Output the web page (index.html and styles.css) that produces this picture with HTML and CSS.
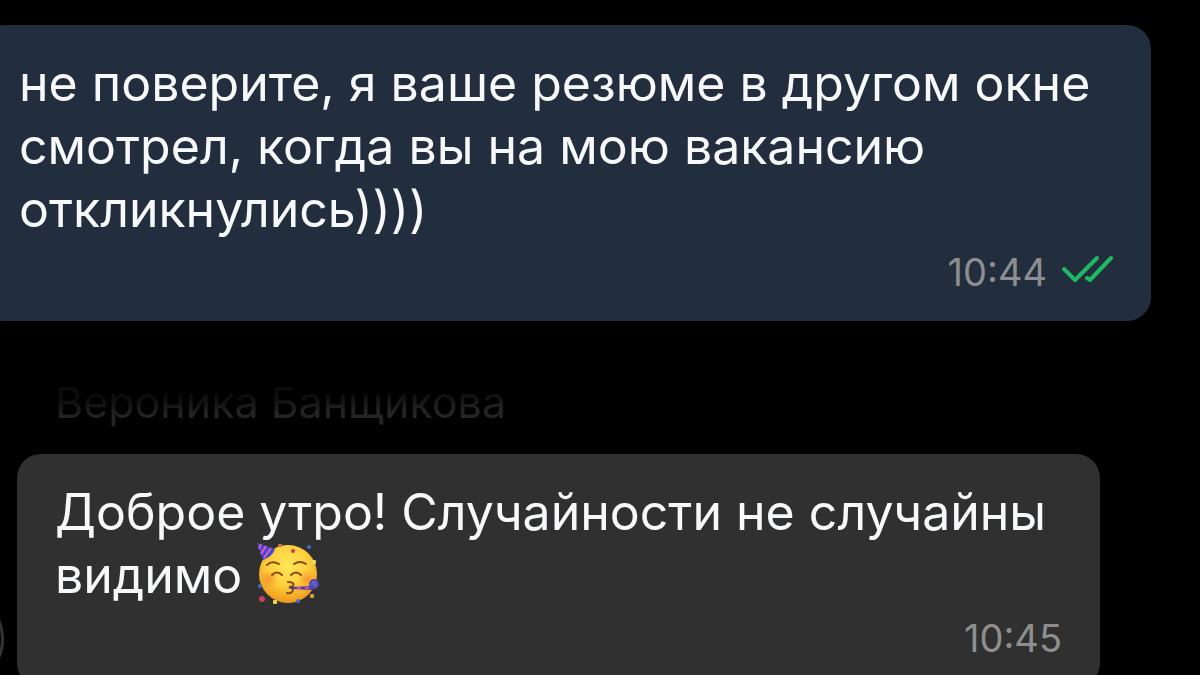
FILE: index.html
```
<!DOCTYPE html>
<html lang="ru">
<head>
  <meta charset="UTF-8">
  <meta name="viewport" content="width=device-width, initial-scale=1">
  <title>Чат</title>
  <link rel="stylesheet" href="styles.css">
</head>
<body>
  <main class="chat">
    <article class="message message-out">
      <p class="text">не поверите, я ваше резюме в другом окне смотрел, когда вы на мою вакансию откликнулись))))</p>
      <div class="meta">
        <time>10:44</time>
        <svg class="checks" viewBox="0 0 52 28" role="img" aria-label="Прочитано">
          <path d="M3 14 L14 25 L36 3"/>
          <path d="M26 23 L29 25 L50 3"/>
        </svg>
      </div>
    </article>

    <h2 class="author">Вероника Банщикова</h2>

    <div class="row">
      <span class="avatar"></span>
      <article class="message message-in">
        <p class="text">Доброе утро! Случайности не случайны видимо <svg class="emoji" viewBox="0 0 64 62" role="img" aria-label="Праздник">
            <defs>
              <radialGradient id="face" cx="50%" cy="35%" r="65%">
                <stop offset="0" stop-color="#ffe75a"/>
                <stop offset="0.55" stop-color="#fdcf3c"/>
                <stop offset="1" stop-color="#ee981f"/>
              </radialGradient>
              <radialGradient id="blush">
                <stop offset="0" stop-color="#f8862c" stop-opacity="0.7"/>
                <stop offset="1" stop-color="#f8862c" stop-opacity="0"/>
              </radialGradient>
            </defs>
            <circle cx="32" cy="31" r="29" fill="url(#face)"/>
            <circle cx="13" cy="36" r="9" fill="url(#blush)"/>
            <circle cx="51" cy="36" r="9" fill="url(#blush)"/>
            <!-- hat -->
            <path d="M1 0 L19 6 Q16 14 7 17 Z" fill="#4a48c9"/>
            <path d="M5 1 L3 6 M10 3 L5 11 M15 5 L8 15" stroke="#d45bcd" stroke-width="2"/>
            <!-- brows and eyes -->
            <g fill="none" stroke="#8a4b12" stroke-width="2" stroke-linecap="round">
              <path d="M11 22 Q16 17 23 21"/>
              <path d="M38 21 Q44 17 50 21"/>
              <path d="M16 32 Q21 27 26 32"/>
              <path d="M35 32 Q40 27 45 32"/>
              <path d="M32 39 Q39 39 37 43 Q35 44 33 44 Q39 46 36 49 Q34 51 31 50"/>
            </g>
            <!-- party horn -->
            <path d="M34 44 L57 43 L57 47 L35 46 Z" fill="#513ba8"/>
            <path d="M41 45 H45 M49 45 H53" stroke="#cf4fae" stroke-width="2"/>
            <circle cx="58" cy="41" r="5" fill="#5048b4"/>
            <path d="M56 42 Q56 38 59 39 Q62 42 58 43" fill="none" stroke="#8d82e4" stroke-width="1"/>
            <!-- confetti -->
            <g>
              <circle cx="37" cy="8" r="2" fill="#d8324a"/>
              <circle cx="53" cy="4" r="2" fill="#3d6fc9"/>
              <circle cx="4" cy="43" r="2" fill="#3d6fc9"/>
              <circle cx="42" cy="58" r="2" fill="#3d6fc9"/>
              <circle cx="6" cy="56" r="3" fill="#c9405c"/>
              <rect x="56" y="17" width="4" height="4" rx="1" fill="#e9dd55"/>
              <rect x="17" y="57" width="4" height="4" rx="1" fill="#ead94a"/>
              <rect x="54" y="51" width="4" height="4" rx="1" fill="#e8953c"/>
              <rect x="22" y="1" width="4" height="3" rx="1" fill="#c97a3a"/>
            </g>
          </svg></p>
        <div class="meta">
          <time>10:45</time>
        </div>
      </article>
    </div>
  </main>
</body>
</html>
```
FILE: styles.css
```
body {
  margin: 0;
  background: #000;
  color: #f7f8fa;
  font-family: Inter, "Noto Sans", sans-serif;
}

.chat {
  height: 100vh;
  box-sizing: border-box;
  padding-top: 25px;
  overflow: hidden;
}

.message {
  padding: 27px 38px 25px;
  border-radius: 24px;
}

.message-out {
  margin: 0 49px 0 -19px;
  background: #222d3d;
}

.message-in {
  flex: 1;
  margin-right: 100px;
  background: #303030;
}

.text {
  margin: 0;
  font-size: 50px;
  font-weight: 430;
  line-height: 63px;
}

.meta {
  display: flex;
  justify-content: flex-end;
  align-items: center;
  gap: 14px;
  margin-top: 7px;
  color: #8e8e8e;
  font-size: 38px;
  line-height: 48px;
}

.checks {
  width: 52px;
  height: 28px;
  margin-bottom: 6px;
  fill: none;
  stroke: #1fb864;
  stroke-width: 4;
  stroke-linecap: round;
  stroke-linejoin: round;
}

/* name fades out towards the top */
.author {
  width: fit-content;
  margin: 53px 0 24px 55px;
  font-size: 43px;
  font-weight: 400;
  line-height: 56px;
  color: transparent;
  background: linear-gradient(179deg, #0c0c0c 40%, #242424 68%);
  background-clip: text;
  -webkit-background-clip: text;
}

.row {
  display: flex;
  align-items: flex-end;
  gap: 13px;
}

.avatar {
  flex: none;
  width: 96px;
  height: 96px;
  box-sizing: border-box;
  margin-left: -92px;
  border: 3px solid #333;
  border-radius: 50%;
}

.emoji {
  width: 64px;
  height: 62px;
  margin: -12px 0;
  vertical-align: 0;
}
```
